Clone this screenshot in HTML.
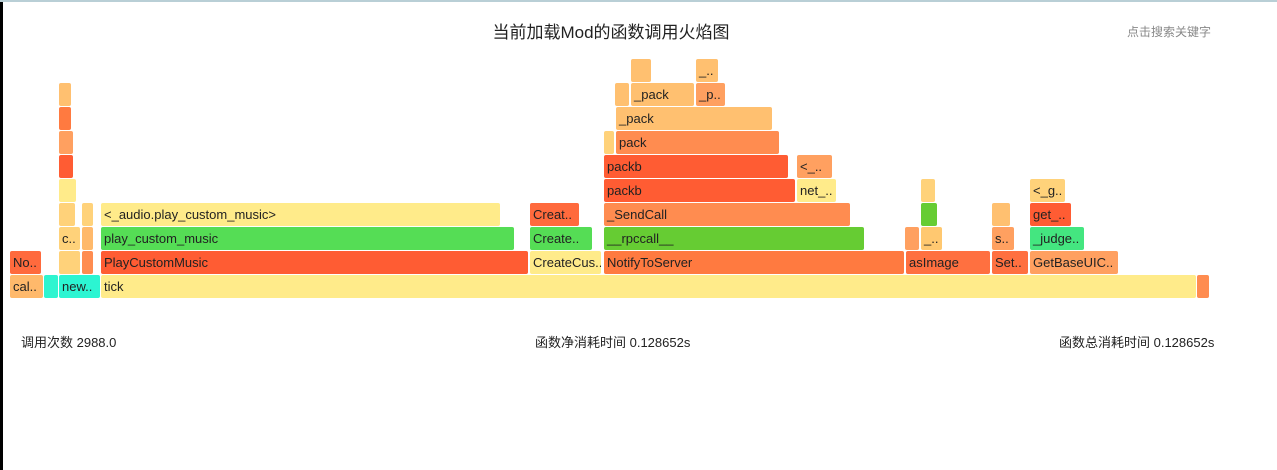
<!DOCTYPE html>
<html><head><meta charset="utf-8"><style>
html,body{margin:0;padding:0;}
body{width:1277px;height:470px;position:relative;background:#fff;overflow:hidden;font-family:"Liberation Sans","Noto Sans CJK SC",sans-serif;}
.lb{position:absolute;left:0;top:0;width:3px;height:470px;background:#000;}
.tb{position:absolute;left:0;top:0;width:1277px;height:2px;background:#b9cfd6;}
.b{position:absolute;height:23px;border-radius:2px;font-size:13px;line-height:24px;color:#222;padding-left:3px;box-sizing:border-box;overflow:hidden;white-space:nowrap;}
.t{position:absolute;font-size:13px;color:#222;top:332px;}
</style></head><body>
<div class="lb"></div><div class="tb"></div>
<div style="position:absolute;top:18px;left:0;width:1222px;text-align:center;font-size:17px;color:#222;">当前加载Mod的函数调用火焰图</div>
<div style="position:absolute;top:23px;left:1127px;font-size:12px;color:#888;">点击搜索关键字</div>

<!-- row0 -->
<div class="b" style="top:275px;left:10px;width:33px;background:#ffb96b">cal..</div>
<div class="b" style="top:275px;left:44px;width:14px;background:#2ef5d0"></div>
<div class="b" style="top:275px;left:59px;width:41px;background:#2cf5d2">new..</div>
<div class="b" style="top:275px;left:101px;width:1095px;background:#ffeb8a">tick</div>
<div class="b" style="top:275px;left:1197px;width:12px;background:#ff8c50"></div>
<!-- row1 -->
<div class="b" style="top:251px;left:10px;width:31px;background:#ff6a3d">No..</div>
<div class="b" style="top:251px;left:59px;width:21px;background:#ffd27a"></div>
<div class="b" style="top:251px;left:82px;width:11px;background:#ff8c50"></div>
<div class="b" style="top:251px;left:101px;width:427px;background:#ff5c33">PlayCustomMusic</div>
<div class="b" style="top:251px;left:530px;width:71px;background:#ffeb8a">CreateCus..</div>
<div class="b" style="top:251px;left:604px;width:300px;background:#ff7a40">NotifyToServer</div>
<div class="b" style="top:251px;left:906px;width:84px;background:#ff7040">asImage</div>
<div class="b" style="top:251px;left:992px;width:36px;background:#ff7040">Set..</div>
<div class="b" style="top:251px;left:1030px;width:88px;background:#ffa060">GetBaseUIC..</div>
<!-- row2 -->
<div class="b" style="top:227px;left:59px;width:21px;background:#ffd27a">c..</div>
<div class="b" style="top:227px;left:82px;width:11px;background:#ffb96b"></div>
<div class="b" style="top:227px;left:101px;width:413px;background:#55dd55">play_custom_music</div>
<div class="b" style="top:227px;left:530px;width:62px;background:#55dd55">Create..</div>
<div class="b" style="top:227px;left:604px;width:260px;background:#66cc33">__rpccall__</div>
<div class="b" style="top:227px;left:905px;width:14px;background:#ffa060"></div>
<div class="b" style="top:227px;left:921px;width:21px;background:#ffc870">_..</div>
<div class="b" style="top:227px;left:992px;width:22px;background:#ffa060">s..</div>
<div class="b" style="top:227px;left:1030px;width:54px;background:#44e680">_judge..</div>
<!-- row3 -->
<div class="b" style="top:203px;left:59px;width:16px;background:#ffd27a"></div>
<div class="b" style="top:203px;left:82px;width:11px;background:#ffd27a"></div>
<div class="b" style="top:203px;left:101px;width:399px;background:#ffeb8a">&lt;_audio.play_custom_music&gt;</div>
<div class="b" style="top:203px;left:530px;width:49px;background:#ff6a3d">Creat..</div>
<div class="b" style="top:203px;left:604px;width:246px;background:#ff8c50">_SendCall</div>
<div class="b" style="top:203px;left:921px;width:16px;background:#66cc33"></div>
<div class="b" style="top:203px;left:992px;width:18px;background:#ffc070"></div>
<div class="b" style="top:203px;left:1030px;width:41px;background:#ff5c33">get_..</div>
<!-- row4 -->
<div class="b" style="top:179px;left:59px;width:17px;background:#ffeb8a"></div>
<div class="b" style="top:179px;left:604px;width:191px;background:#ff5c33">packb</div>
<div class="b" style="top:179px;left:797px;width:39px;background:#ffeb8a">net_..</div>
<div class="b" style="top:179px;left:921px;width:14px;background:#ffd27a"></div>
<div class="b" style="top:179px;left:1030px;width:35px;background:#ffd27a">&lt;_g..</div>
<!-- row5 -->
<div class="b" style="top:155px;left:59px;width:14px;background:#ff5c33"></div>
<div class="b" style="top:155px;left:604px;width:184px;background:#ff5c33">packb</div>
<div class="b" style="top:155px;left:797px;width:35px;background:#ffa060">&lt;_..</div>
<!-- row6 -->
<div class="b" style="top:131px;left:59px;width:14px;background:#ffa060"></div>
<div class="b" style="top:131px;left:604px;width:10px;background:#ffd27a"></div>
<div class="b" style="top:131px;left:616px;width:163px;background:#ff8c50">pack</div>
<!-- row7 -->
<div class="b" style="top:107px;left:59px;width:12px;background:#ff7a40"></div>
<div class="b" style="top:107px;left:616px;width:156px;background:#ffc070">_pack</div>
<!-- row8 -->
<div class="b" style="top:83px;left:59px;width:12px;background:#ffc070"></div>
<div class="b" style="top:83px;left:615px;width:14px;background:#ffc070"></div>
<div class="b" style="top:83px;left:631px;width:63px;background:#ffc070">_pack</div>
<div class="b" style="top:83px;left:696px;width:29px;background:#ffa060">_p..</div>
<!-- row9 -->
<div class="b" style="top:59px;left:631px;width:20px;background:#ffc070"></div>
<div class="b" style="top:59px;left:696px;width:22px;background:#ffc070">_..</div>

<div class="t" style="left:21px;">调用次数 2988.0</div>
<div class="t" style="left:535px;">函数净消耗时间 0.128652s</div>
<div class="t" style="left:1059px;">函数总消耗时间 0.128652s</div>
</body></html>
